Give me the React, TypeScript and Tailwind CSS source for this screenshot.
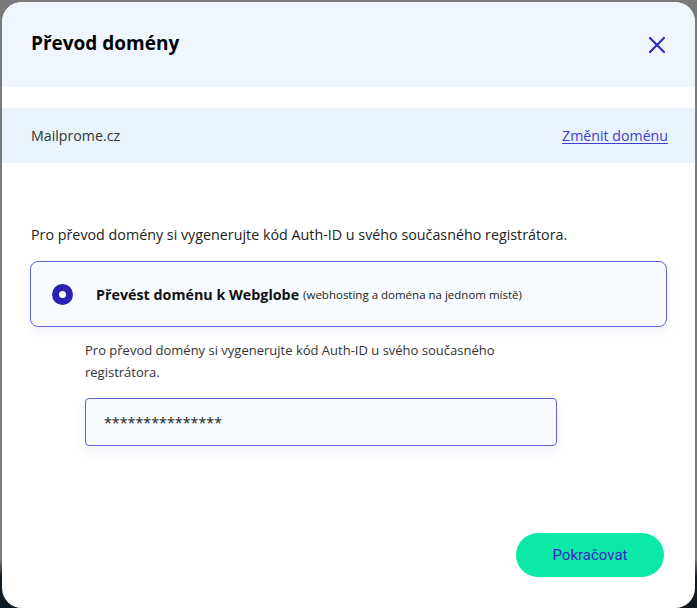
import React, { useState } from 'react';

const App: React.FC = () => {
  const [authCode, setAuthCode] = useState('***************');

  return (
    <div className="h-[608px] w-[697px] overflow-hidden bg-[linear-gradient(to_bottom,#7a7a7a_0%,#7a7a7a_92%,#0e1a24_95%)] p-[2px] font-['Open_Sans',sans-serif]">
      <div className="flex h-[606px] flex-col overflow-hidden rounded-[20px] bg-white">
        {/* Header */}
        <div className="flex h-[85px] shrink-0 items-center justify-between bg-[#eff6ff] pb-[3px] pl-[29px] pr-[28px]">
          <h2 className="text-[19px] font-bold text-black">Převod domény</h2>
          <button className="mt-[3px] text-[#2e2fb6]" aria-label="Zavřít">
            <svg width="20" height="20" viewBox="0 0 20 20" fill="none" stroke="currentColor" strokeWidth="2.2" strokeLinecap="round">
              <path d="M3 3L17 17M17 3L3 17" />
            </svg>
          </button>
        </div>

        {/* Domain bar */}
        <div className="mt-[21px] flex h-[55px] shrink-0 items-center justify-between bg-[#e9f3fd] pl-[29px] pr-[27px]">
          <span className="text-[14.2px] text-[#333]">Mailprome.cz</span>
          <a href="#" className="text-[14.2px] text-[#3d3fcf] underline underline-offset-2">Změnit doménu</a>
        </div>

        {/* Body */}
        <div className="flex flex-1 flex-col pl-[28px] pr-[28px]">
          <p className="mt-[61px] pl-[1px] text-[14.3px] text-[#222]">
            Pro převod domény si vygenerujte kód Auth-ID u svého současného registrátora.
          </p>

          <div className="mt-[16px] flex h-[66px] items-center rounded-[8px] border border-[#6064d8] bg-[#f7faff] pl-[21px] shadow-[0_4px_10px_rgba(80,90,200,0.08)]">
            <span className="flex h-[21px] w-[21px] items-center justify-center rounded-full bg-[#2a22b4]">
              <span className="h-[7px] w-[7px] rounded-full bg-white" />
            </span>
            <span className="ml-[23px] text-[14.3px] font-bold text-[#111]">Převést doménu k Webglobe</span>
            <span className="ml-[4px] text-[11.5px] text-[#222]">(webhosting a doména na jednom místě)</span>
          </div>

          <div className="pl-[55px]">
            <p className="mt-[12px] w-[440px] text-[13px] leading-[22px] text-[#333]">
              Pro převod domény si vygenerujte kód Auth-ID u svého současného registrátora.
            </p>
            <input
              value={authCode}
              onChange={(e) => setAuthCode(e.target.value)}
              className="mt-[15px] h-[48px] w-[472px] rounded-[4px] border border-[#6064d8] bg-[#f7faff] px-[18px] text-[14.3px] text-[#222] shadow-[0_6px_12px_rgba(80,90,200,0.07)] outline-none"
            />
          </div>

          <div className="mt-auto mb-[31px] flex justify-end pr-[3px]">
            <button className="h-[44px] w-[148px] rounded-full bg-[#0ce9a6] font-['Roboto',sans-serif] text-[15px] font-normal text-[#3528c4]">
              Pokračovat
            </button>
          </div>
        </div>
      </div>
    </div>
  );
};

export default App;
